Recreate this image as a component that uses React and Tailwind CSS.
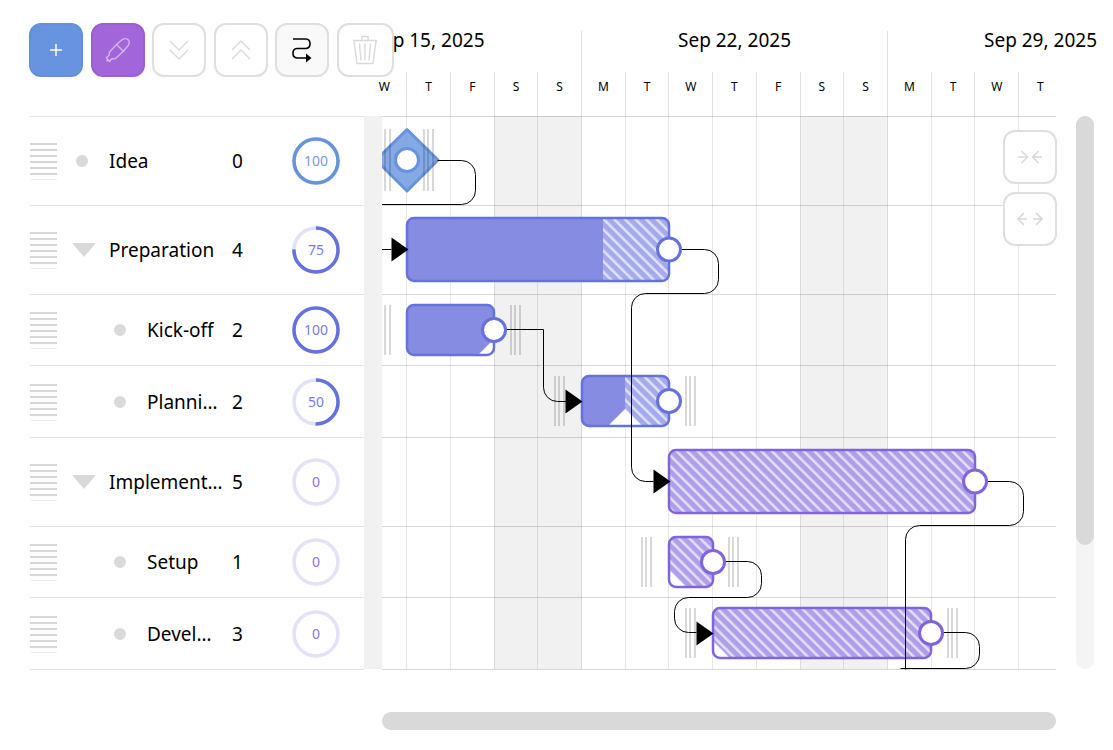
import { useState } from "react";

const DAY = 306 / 7;
const FIRST_MONDAY = -107;
const dayX = (n) => Math.round(FIRST_MONDAY + n * DAY);

const weeks = [
  { label: "Sep 15, 2025", days: ["W", "T", "F", "S", "S"], align: "justify-end" },
  { label: "Sep 22, 2025", days: ["M", "T", "W", "T", "F", "S", "S"], align: "justify-start" },
  { label: "Sep 29, 2025", days: ["M", "T", "W", "T"], align: "justify-start" },
];

const BLUE = "#6593de";
const INDIGO = "#6571dc";
const VIOLET = "#8064dc";

const tasks = [
  { name: "Idea", days: 0, progress: 100, color: BLUE, row: "h-[89px]" },
  { name: "Preparation", days: 4, progress: 75, color: INDIGO, group: true, row: "h-[89px]" },
  { name: "Kick-off", days: 2, progress: 100, color: INDIGO, child: true, row: "h-[71px]" },
  { name: "Planning", days: 2, progress: 50, color: INDIGO, child: true, row: "h-[72px]" },
  { name: "Implementation", days: 5, progress: 0, color: VIOLET, group: true, row: "h-[89px]" },
  { name: "Setup", days: 1, progress: 0, color: VIOLET, child: true, row: "h-[71px]" },
  { name: "Development", days: 3, progress: 0, color: VIOLET, child: true, row: "h-[72px]" },
];

const rowLines = [0, 89, 178, 249, 321, 410, 481];

// x / w / y / h are canvas pixels, done is the width of the finished part
const bars = [
  { id: "prep", x: 25, y: 102, w: 262, h: 63, done: 196, color: INDIGO, hatch: "url(#hatch-indigo)" },
  { id: "kick", x: 25, y: 189, w: 87, h: 50, done: 87, color: INDIGO, hatch: "url(#hatch-indigo)", notch: 88 },
  { id: "plan", x: 200, y: 260, w: 87, h: 50, done: 43, color: INDIGO, hatch: "url(#hatch-indigo)", notch: 43 },
  { id: "impl", x: 287, y: 334, w: 306, h: 63, done: 0, color: VIOLET, hatch: "url(#hatch-violet)" },
  { id: "setup", x: 287, y: 421, w: 44, h: 50, done: 0, color: VIOLET, hatch: "url(#hatch-violet)", notch: 0 },
  { id: "devel", x: 331, y: 492, w: 218, h: 50, done: 0, color: VIOLET, hatch: "url(#hatch-violet)", notch: 0 },
];

const grips = [
  { x: -1, y: 13, h: 62 },
  { x: 42, y: 13, h: 62 },
  { x: -1, y: 189, h: 50 },
  { x: 129, y: 189, h: 50 },
  { x: 173, y: 260, h: 50 },
  { x: 304, y: 260, h: 50 },
  { x: 260, y: 421, h: 50 },
  { x: 347, y: 421, h: 50 },
  { x: 304, y: 492, h: 50 },
  { x: 566, y: 492, h: 50 },
];

const links = [
  "M56 44 H80 A14 14 0 0 1 94 58 V74 A14 14 0 0 1 80 88 H-4",
  "M-4 133 H10",
  "M299 133 H323 A14 14 0 0 1 337 147 V163 A14 14 0 0 1 323 177 H264 A14 14 0 0 0 250 191 V351 A14 14 0 0 0 264 365 H272",
  "M124 213 H162 V271 A14 14 0 0 0 176 285 H185",
  "M604 365 H628 A14 14 0 0 1 642 379 V395 A14 14 0 0 1 628 409 H538 A14 14 0 0 0 524 423 V553",
  "M342 445 H366 A14 14 0 0 1 380 459 V467 A14 14 0 0 1 366 481 H307 A14 14 0 0 0 293 495 V502 A14 14 0 0 0 307 516 H315",
  "M560 516 H584 A14 14 0 0 1 598 530 V538 A14 14 0 0 1 584 552 H519",
];

const arrows = [
  [10, 133],
  [184, 285],
  [272, 365],
  [315, 517],
];

function ToolButton({ label, className, children, ...rest }) {
  return (
    <button
      type="button"
      aria-label={label}
      className={`flex h-[54px] shrink-0 items-center justify-center rounded-xl border-2 ${className}`}
      {...rest}
    >
      {children}
    </button>
  );
}

const PLAIN = "w-[54px] border-[#dfdfdf] bg-white text-[#d9d9d9]";

function Toolbar({ showLinks, onToggleLinks }) {
  return (
    <div className="relative z-10 mt-[23px] flex w-[365px] justify-between">
      <ToolButton label="Add task" className="w-[54px] border-[#6390dc] bg-[#6893de] text-white">
        <svg width="14" height="14" viewBox="0 0 14 14" fill="none" stroke="currentColor" strokeWidth="1.5">
          <path d="M7 1V13M1 7H13" />
        </svg>
      </ToolButton>
      <ToolButton label="Pick colour" className="w-[54px] border-[#9a5fd0] bg-[#a266da] text-[#d3b4ee]">
        <svg width="26" height="26" viewBox="0 0 26 26" fill="none" stroke="currentColor" strokeWidth="1.4" strokeLinejoin="round">
          <path d="M11.500 7.500L17 2.800Q20.500 .600 23 2.600Q25.400 5 23.200 8.500L18.500 14L10.500 21.500L6.500 22L4.500 24.500L3.500 23L2 23.800L2.400 22L1.400 20.500L4 18.500L4.500 15L11.500 7.500Z" />
          <path d="M11 7L19 15" />
        </svg>
      </ToolButton>
      <ToolButton label="Expand all" className={PLAIN}>
        <svg width="20" height="20" viewBox="0 0 20 20" fill="none" stroke="currentColor" strokeWidth="1.4">
          <path d="M1 1L10 10L19 1M1 10L10 19L19 10" />
        </svg>
      </ToolButton>
      <ToolButton label="Collapse all" className={PLAIN}>
        <svg width="20" height="20" viewBox="0 0 20 20" fill="none" stroke="currentColor" strokeWidth="1.4">
          <path d="M1 10L10 1L19 10M1 19L10 10L19 19" />
        </svg>
      </ToolButton>
      <ToolButton
        label="Show links"
        aria-pressed={showLinks}
        onClick={onToggleLinks}
        className="w-[54px] border-[#dfdfdf] bg-[#f9f9f9] text-black"
      >
        <svg width="20" height="26" viewBox="0 0 20 26" fill="none" stroke="currentColor" strokeWidth="1.6">
          <path d="M1 2H14A4.500 4.500 0 0 1 18 6.500V7A4.500 4.500 0 0 1 14 11.500H5A4.500 4.500 0 0 0 1 16V16.500A4.500 4.500 0 0 0 5 21H14" />
          <path d="M14 16.500L19.500 21L14 25.500Z" fill="currentColor" stroke="none" />
        </svg>
      </ToolButton>
      <ToolButton label="Delete" className="w-[57px] border-[#dfdfdf] bg-white text-[#d9d9d9]">
        <svg width="26" height="30" viewBox="0 0 26 30" fill="none" stroke="currentColor" strokeWidth="1.4">
          <path d="M1 5.500H25M10 5V1.500H16V5M2 6L5 28.500H21L24 6M7.500 8.500L9 25.500M13 8.500V25.500M18.500 8.500L17 25.500" />
        </svg>
      </ToolButton>
    </div>
  );
}

function TimeScale() {
  return (
    <div className="-ml-[107px] mt-[31px] flex h-[85px]">
      {weeks.map((week, i) => (
        <div key={week.label} className="flex w-[306px] shrink-0 flex-col">
          <div className={`h-[41px] text-center text-[19px] leading-[18px] ${i > 0 ? "border-l border-[#e0e0e0]" : ""}`}>
            {week.label}
          </div>
          <div className={`flex h-11 ${week.align}`}>
            {week.days.map((day, n) => (
              <div
                key={n}
                className={`w-1/7 pt-1 text-center text-xs leading-[22px] ${i + n > 0 ? "border-l border-[#e0e0e0]" : ""}`}
              >
                {day}
              </div>
            ))}
          </div>
        </div>
      ))}
    </div>
  );
}

function ProgressRing({ value, color }) {
  const length = 2 * Math.PI * 22;
  return (
    <div className="relative flex size-12 items-center justify-center text-sm" style={{ color }}>
      <svg className="absolute inset-0" width="48" height="48" viewBox="0 0 48 48" fill="none" stroke={color} strokeWidth="3.500">
        <circle cx="24" cy="24" r="22" opacity="0.2" />
        {value > 0 && (
          <circle cx="24" cy="24" r="22" strokeDasharray={`${(length * value) / 100} ${length}`} transform="rotate(-90 24 24)" />
        )}
      </svg>
      <span className="opacity-90">{value}</span>
    </div>
  );
}

function RowHandle() {
  return (
    <svg width="27" height="38" viewBox="0 0 27 38" fill="#d6d6d6" className="block">
      {[0, 6, 12, 18, 24, 30].map((y) => (
        <rect key={y} y={y + 1} width="27" height="2" />
      ))}
      <rect y="37" width="27" height="1" opacity="0.4" />
    </svg>
  );
}

function TaskTable() {
  return (
    <table className="w-full table-fixed border-collapse">
      <colgroup>
        <col className="w-10" />
        <col />
        <col className="w-[60px]" />
        <col className="w-[72px]" />
      </colgroup>
      <tbody>
        {tasks.map((task) => (
          <tr key={task.name} className={`border-y border-[#e2e2e2] ${task.row}`}>
            <td className="p-0">
              <RowHandle />
            </td>
            <td className="p-0">
              <div className={`flex items-center ${task.child ? "pr-3 pl-10" : "pr-[7px] pl-0.5"}`}>
                <div className="flex w-[37px] shrink-0 items-center">
                  {task.group ? (
                    <button type="button" aria-label={`Collapse ${task.name}`}>
                      <svg width="24" height="14" viewBox="0 0 24 14" fill="#d9d9d9">
                        <path d="M0 0H24L12 14Z" />
                      </svg>
                    </button>
                  ) : (
                    <span className="ml-1 size-3 rounded-full bg-[#d9d9d9]" />
                  )}
                </div>
                <span className="truncate text-[19px] leading-7">{task.name}</span>
              </div>
            </td>
            <td className="p-0 text-[19px] leading-7">{task.days}</td>
            <td className="p-0">
              <ProgressRing value={task.progress} color={task.color} />
            </td>
          </tr>
        ))}
      </tbody>
    </table>
  );
}

function Hatch({ id, color }) {
  return (
    <pattern id={id} width="7.500" height="7.500" patternUnits="userSpaceOnUse" patternTransform="rotate(-45)">
      <rect width="7.500" height="7.500" fill={color} />
      <rect width="2.500" height="7.500" fill="#fff" opacity="0.65" />
    </pattern>
  );
}

function Bar({ bar }) {
  const { x, y, w, h, done, color, hatch, notch, id } = bar;
  return (
    <g>
      <clipPath id={`clip-${id}`}>
        <rect x={x} y={y} width={w} height={h} rx="7" />
      </clipPath>
      <g clipPath={`url(#clip-${id})`}>
        <rect x={x + done} y={y} width={w - done} height={h} fill={hatch} opacity="0.95" />
        <rect x={x} y={y} width={done} height={h} fill="#838ae0" opacity="0.98" />
        {notch !== undefined && (
          <path d={`M${x + notch} ${y + h - 17}l18 18h-36Z`} fill="#fff" />
        )}
      </g>
      <rect x={x} y={y} width={w} height={h} rx="7" fill="none" stroke={color} strokeWidth="2.500" />
    </g>
  );
}

function Chart({ showLinks }) {
  return (
    <svg className="block h-[554px] w-full" role="img" aria-label="Task timeline">
      <defs>
        <Hatch id="hatch-indigo" color="#9fa5ea" />
        <Hatch id="hatch-violet" color="#ab9ae8" />
      </defs>

      <g fill="#f1f1f1">
        <rect x={dayX(5)} y="0" width="88" height="553" />
        <rect x={dayX(12)} y="0" width="88" height="553" />
      </g>
      <g fill="#000" opacity="0.09">
        {Array.from({ length: 15 }, (_, i) => (
          <rect key={i} x={dayX(i + 3)} y="0" width="1" height="553" />
        ))}
      </g>
      <g fill="#000" opacity="0.15">
        {rowLines.map((y) => (
          <rect key={y} y={y} width="100%" height="1" />
        ))}
        <rect y="553" width="100%" height="1" />
      </g>

      {bars.map((bar) => (
        <Bar key={bar.id} bar={bar} />
      ))}
      <path d="M25 13.500L56 44L25 75L-6 44Z" fill={BLUE} fillOpacity="0.8" stroke={BLUE} strokeWidth="3" strokeLinejoin="round" />

      <g fill="#000" opacity="0.15">
        {grips.map((g, i) => (
          <g key={i}>
            <rect x={g.x - 1} y={g.y} width="2" height={g.h} />
            <rect x={g.x + 3} y={g.y} width="2" height={g.h} />
            <rect x={g.x + 8} y={g.y} width="2" height={g.h} />
          </g>
        ))}
      </g>

      {showLinks && (
        <g transform="translate(-.5 .5)">
          <g fill="none" stroke="#000">
            {links.map((d) => (
              <path key={d} d={d} />
            ))}
          </g>
          {arrows.map(([x, y]) => (
            <path key={x} d={`M${x} ${y - 12}L${x + 17} ${y}L${x} ${y + 12}Z`} />
          ))}
        </g>
      )}

      <circle cx="25" cy="44" r="11.500" fill="#fff" stroke={BLUE} strokeWidth="3" />
      {bars.map((bar) => (
        <circle key={bar.id} cx={bar.x + bar.w} cy={bar.y + bar.h / 2} r="11.500" fill="#fff" stroke={bar.color} strokeWidth="3" />
      ))}
    </svg>
  );
}

export default function App() {
  const [showLinks, setShowLinks] = useState(true);

  return (
    <div className="overflow-x-clip bg-white pb-5 pl-[29px] pr-[19px] font-['Noto_Sans',sans-serif] text-black">
      <div className="grid grid-cols-[335px_18px_minmax(0,1fr)_18px] grid-rows-[116px_auto]">
        <Toolbar showLinks={showLinks} onToggleLinks={() => setShowLinks(!showLinks)} />
        <div />
        <TimeScale />
        <div />

        <div className="pl-px">
          <TaskTable />
        </div>
        <div className="h-[553px] bg-[#f1f1f1]" />
        <div className="relative mr-5">
          <Chart showLinks={showLinks} />
          <div className="absolute top-3.5 -right-px flex flex-col gap-2">
            <ToolButton label="Zoom out" className={PLAIN}>
              <svg width="26" height="14" viewBox="0 0 26 14" fill="none" stroke="currentColor" strokeWidth="1.6">
                <path d="M1 7H10M4.500 1L10.500 7L4.500 13M25 7H16M21.500 1L15.500 7L21.500 13" />
              </svg>
            </ToolButton>
            <ToolButton label="Zoom in" className={PLAIN}>
              <svg width="26" height="14" viewBox="0 0 26 14" fill="none" stroke="currentColor" strokeWidth="1.6">
                <path d="M10 7H1M7 1L1 7L7 13M16 7H25M19 1L25 7L19 13" />
              </svg>
            </ToolButton>
          </div>
        </div>
        <div className="h-[553px] rounded-full bg-[#f4f4f4]">
          <div className="h-[429px] rounded-full bg-[#d9d9d9]" />
        </div>
      </div>

      <div className="mt-[42px] mr-[38px] ml-[353px] h-[18px] rounded-full bg-[#d9d9d9]" />
    </div>
  );
}
